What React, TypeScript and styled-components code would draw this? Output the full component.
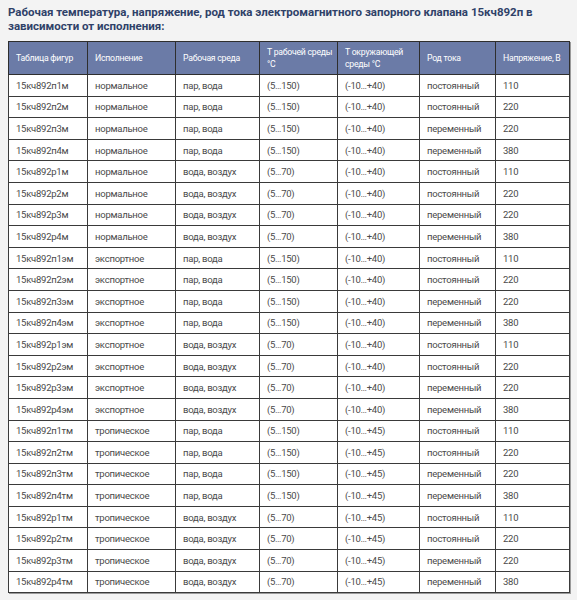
import React from "react";
import styled, { createGlobalStyle } from "styled-components";

const GlobalStyle = createGlobalStyle`
    body {
        margin: 0;
        background: #f3f3f3;
        font-family: Roboto, "Open Sans", "Liberation Sans", sans-serif;
    }
`;

const Page = styled.div`
    padding: 5px 8px 6px 8px;
`;

const Title = styled.h3`
    margin: 0 0 8px 0;
    font-size: 11.5px;
    line-height: 14px;
    font-weight: 700;
    color: #2f4168;
`;

const Table = styled.table`
    width: 561px;
    border-collapse: collapse;
    table-layout: fixed;
    background: #fff;
    border: 1px solid #3a3a3a;
    box-shadow: 1px 1px 0 #9a9a9a;
`;

const HeadCell = styled.th`
    height: 32px;
    padding: 0 6px 0 7px;
    background: #6b7ba7;
    color: #fff;
    font-size: 8.7px;
    letter-spacing: -0.25px;
    line-height: 12px;
    font-weight: 400;
    text-align: left;
    white-space: nowrap;
    overflow: hidden;
    border: 1px solid #2e2e2e;
`;

const Cell = styled.td`
    height: 20.6px;
    padding: 0 7px;
    font-size: 9.5px;
    letter-spacing: -0.25px;
    color: #4a4a4a;
    border: 1px solid #3a3a3a;
    white-space: nowrap;
`;

const widths = [79, 88, 84, 78, 82, 76, 74];

// строки заголовка с переносами как в оригинале
const headers = [
    ["Таблица фигур"],
    ["Исполнение"],
    ["Рабочая среда"],
    ["Т рабочей среды", "°С"],
    ["Т окружающей", "среды °С"],
    ["Род тока"],
    ["Напряжение, В"],
];

// исполнение -> суффикс, температура окружающей среды
const versions = [
    { suffix: "м", name: "нормальное", env: "(-10…+40)" },
    { suffix: "эм", name: "экспортное", env: "(-10…+40)" },
    { suffix: "тм", name: "тропическое", env: "(-10…+45)" },
];

const variants = [
    { code: "п1", media: "пар, вода", temp: "(5…150)", current: "постоянный", volt: "110" },
    { code: "п2", media: "пар, вода", temp: "(5…150)", current: "постоянный", volt: "220" },
    { code: "п3", media: "пар, вода", temp: "(5…150)", current: "переменный", volt: "220" },
    { code: "п4", media: "пар, вода", temp: "(5…150)", current: "переменный", volt: "380" },
    { code: "р1", media: "вода, воздух", temp: "(5…70)", current: "постоянный", volt: "110" },
    { code: "р2", media: "вода, воздух", temp: "(5…70)", current: "постоянный", volt: "220" },
    { code: "р3", media: "вода, воздух", temp: "(5…70)", current: "переменный", volt: "220" },
    { code: "р4", media: "вода, воздух", temp: "(5…70)", current: "переменный", volt: "380" },
];

const rows = versions.flatMap((v) =>
    variants.map((r) => [
        `15кч892${r.code}${v.suffix}`,
        v.name,
        r.media,
        r.temp,
        v.env,
        r.current,
        r.volt,
    ])
);

export default function App() {
    return (
        <Page>
            <GlobalStyle />
            <Title>
                Рабочая температура, напряжение, род тока электромагнитного запорного клапана 15кч892п в
                зависимости от исполнения:
            </Title>
            <Table>
                <colgroup>
                    {widths.map((w, i) => (
                        <col key={i} style={{ width: w }} />
                    ))}
                </colgroup>
                <thead>
                    <tr>
                        {headers.map((h) => (
                            <HeadCell key={h[0]}>
                                {h.map((line, i) => (
                                    <React.Fragment key={i}>
                                        {i > 0 && <br />}
                                        {line}
                                    </React.Fragment>
                                ))}
                            </HeadCell>
                        ))}
                    </tr>
                </thead>
                <tbody>
                    {rows.map((row) => (
                        <tr key={row[0]}>
                            {row.map((c, i) => (
                                <Cell key={i}>{c}</Cell>
                            ))}
                        </tr>
                    ))}
                </tbody>
            </Table>
        </Page>
    );
}
